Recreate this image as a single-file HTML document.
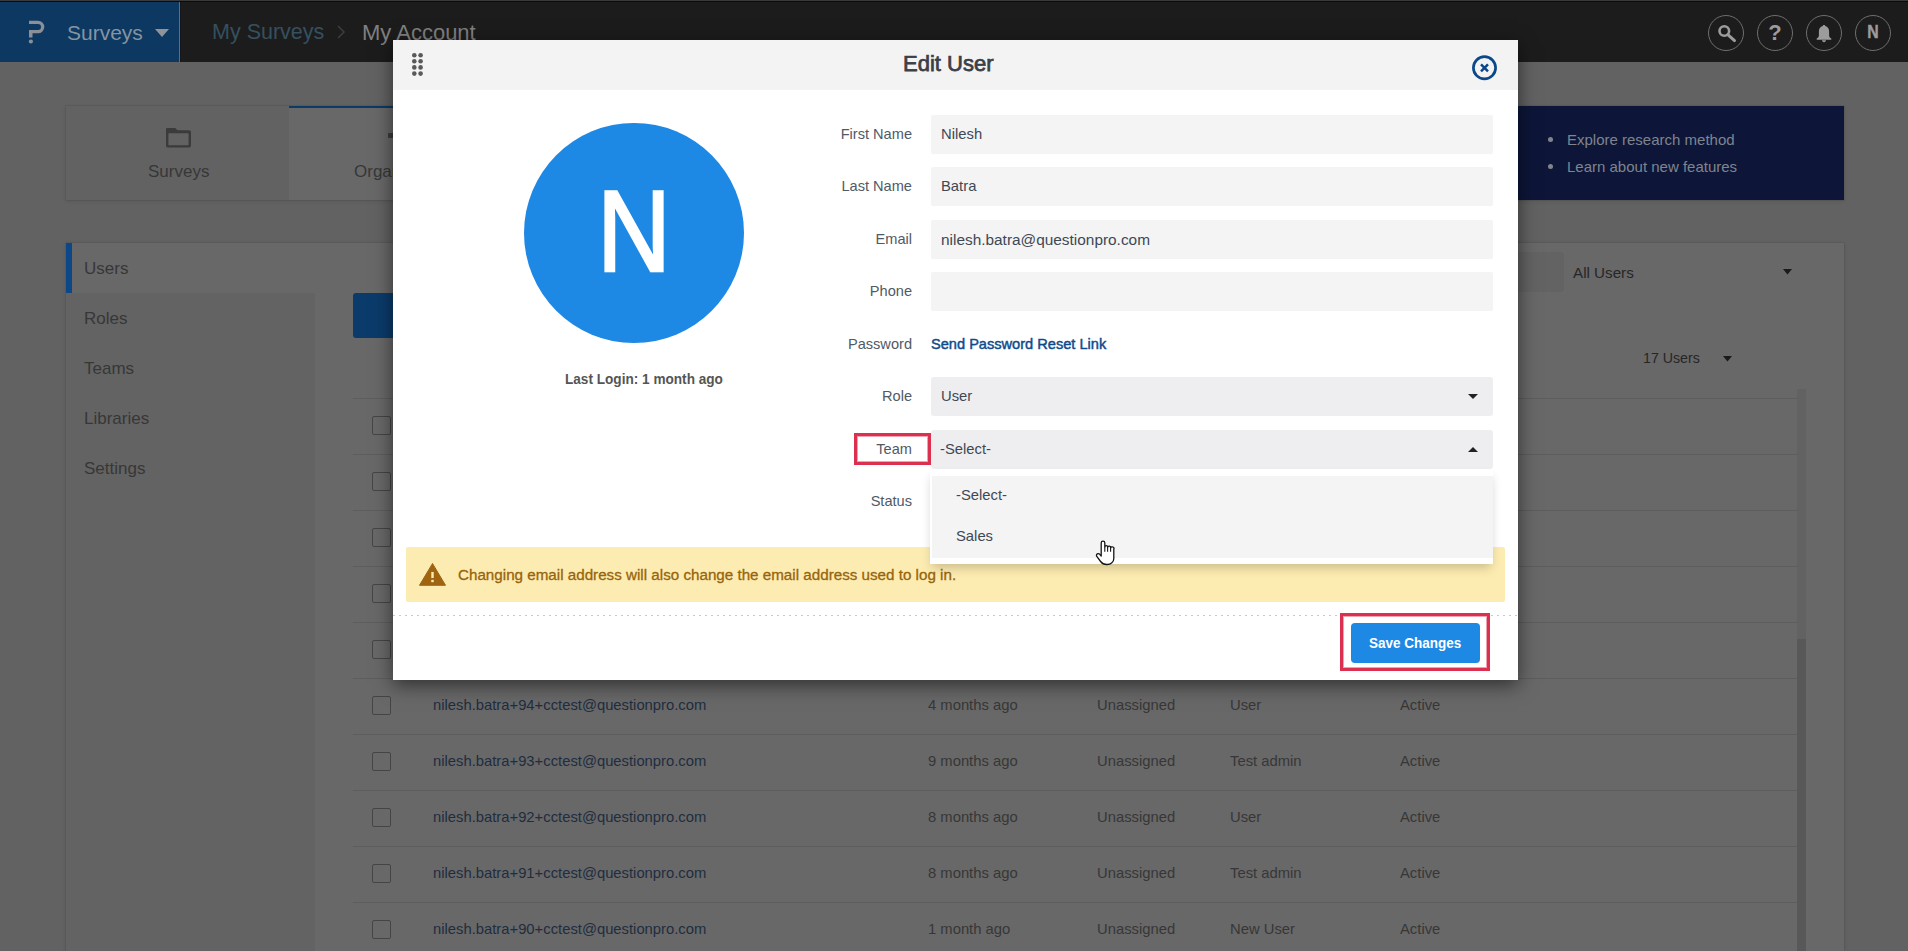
<!DOCTYPE html>
<html><head><meta charset="utf-8">
<style>
*{box-sizing:border-box;margin:0;padding:0}
html,body{width:1908px;height:951px;overflow:hidden;background:#626262;font-family:"Liberation Sans",sans-serif}
.a{position:absolute}
.t{position:absolute;white-space:nowrap;line-height:1}
.rc{font-size:14.8px;color:#373737}
.lbl{right:996px;font-size:14.6px;color:#505a66;text-align:right}
.val{left:941px;font-size:14.8px;color:#3e4854}
.inp{left:931px;width:562px;height:39px;background:#f4f4f4;border-radius:2px}
.sel{left:931px;width:562px;height:39px;background:#eeeef0;border-radius:3px}
</style></head><body>
<!-- HEADER -->
<div class="a" style="left:0;top:0;width:1908px;height:62px;background:#1c1c1c;border-top:2px solid #0b0b0b"></div>
<div class="a" style="left:0;top:0;width:1908px;height:1px;background:#3a3a3a"></div>
<div class="a" style="left:0;top:2px;width:179px;height:60px;background:#0c3862"></div>
<div class="a" style="left:179px;top:2px;width:1px;height:60px;background:#5b6f82"></div>
<div class="a" style="left:180px;top:2px;width:1px;height:60px;background:#14171b"></div>
<svg class="a" style="left:26px;top:18px" width="22" height="30" viewBox="0 0 22 30">
  <path d="M3 2.7 H12 A6.3 6.3 0 0 1 12 15.3 H6.5 V19.5 H3 V12 H12 A3 3 0 0 0 12 6 H3 Z" fill="#8a9096"/>
  <circle cx="4.9" cy="23.5" r="2.1" fill="#8a9096"/>
</svg>
<div class="t" style="left:67px;top:22px;font-size:21px;color:#8594a1">Surveys</div>
<svg class="a" style="left:155px;top:29px" width="14" height="8"><path d="M0 0H14L7 8Z" fill="#8f9498"/></svg>
<div class="t" style="left:212px;top:22px;font-size:21.5px;color:#35505f">My Surveys</div>
<svg class="a" style="left:336px;top:25px" width="10" height="14"><path d="M2 1L8 7L2 13" stroke="#3d3d3d" stroke-width="1.5" fill="none"/></svg>
<div class="t" style="left:362px;top:22px;font-size:22px;color:#808080">My Account</div>

<!-- header icons -->
<div class="a" style="left:1708px;top:15px;width:36px;height:36px;border:1.5px solid #6e6e6e;border-radius:50%"></div>
<div class="a" style="left:1757px;top:15px;width:36px;height:36px;border:1.5px solid #6e6e6e;border-radius:50%"></div>
<div class="a" style="left:1806px;top:15px;width:36px;height:36px;border:1.5px solid #6e6e6e;border-radius:50%"></div>
<div class="a" style="left:1855px;top:15px;width:36px;height:36px;border:1.5px solid #6e6e6e;border-radius:50%"></div>
<svg class="a" style="left:1708px;top:15px" width="36" height="36"><circle cx="16.3" cy="16" r="4.8" fill="none" stroke="#9c9c9c" stroke-width="2.6"/><path d="M19.8 19.6L26.5 25.6" stroke="#9c9c9c" stroke-width="3" stroke-linecap="round"/></svg>
<div class="t" style="left:1757px;top:22px;width:36px;text-align:center;font-size:22px;font-weight:bold;color:#9c9c9c">?</div>
<svg class="a" style="left:1806px;top:15px" width="36" height="36"><path d="M18 10c.8 0 1.3.5 1.3 1.1 2.5.7 3.8 2.8 3.8 5.5v3.8c0 1.2.8 2.2 2.2 3.2v1.1H10.7v-1.1c1.4-1 2.2-2 2.2-3.2v-3.8c0-2.7 1.3-4.8 3.8-5.5 0-.6.5-1.1 1.3-1.1zM16 25.3h4c0 1.1-.9 1.9-2 1.9s-2-.8-2-1.9z" fill="#9c9c9c"/></svg>
<div class="t" style="left:1855px;top:23px;width:36px;text-align:center;font-size:18px;font-weight:bold;color:#9c9c9c;transform:scaleX(0.88);-webkit-text-stroke:0.4px #9c9c9c">N</div>

<!-- PAGE BG CONTENT -->
<!-- tab panel -->
<div class="a" style="left:66px;top:106px;width:1778px;height:94px;background:#646464;box-shadow:0 0 0 1px rgba(0,0,0,.05),0 1px 4px rgba(0,0,0,.12)"></div>
<div class="a" style="left:66px;top:106px;width:223px;height:94px;background:#626262"></div>
<div class="a" style="left:289px;top:106px;width:250px;height:94px;background:#686868;border-top:2.5px solid #0b3a67"></div>
<svg class="a" style="left:165px;top:127px" width="27" height="22" viewBox="0 0 27 22"><rect x="2.2" y="4.6" width="22.6" height="14.8" rx="1" fill="none" stroke="#3b3b3b" stroke-width="2.4"/><path d="M1 5V2.2Q1 1 2.2 1H10.4L12.6 3.4H24.3Q25.9 3.4 25.9 5V6.3H1Z" fill="#3b3b3b"/></svg>
<div class="t" style="left:148px;top:163px;font-size:17px;color:#373737">Surveys</div>
<div class="t" style="left:354px;top:163px;font-size:17px;color:#373737">Organization</div>
<div class="a" style="left:388px;top:133px;width:6px;height:5px;border-radius:1px;background:#3c3c3c"></div>
<!-- banner -->
<div class="a" style="left:1300px;top:106px;width:544px;height:94px;background:#0d1639"></div>
<div class="a" style="left:1548px;top:137px;width:5px;height:5px;border-radius:50%;background:#80848d"></div>
<div class="a" style="left:1548px;top:164px;width:5px;height:5px;border-radius:50%;background:#80848d"></div>
<div class="t" style="left:1567px;top:132px;font-size:15px;color:#7f848e">Explore research method</div>
<div class="t" style="left:1567px;top:159px;font-size:15px;color:#7f848e">Learn about new features</div>

<!-- main card -->
<div class="a" style="left:66px;top:243px;width:1778px;height:708px;background:#686868;box-shadow:0 0 0 1px rgba(0,0,0,.05),0 1px 4px rgba(0,0,0,.12)"></div>
<div class="a" style="left:66px;top:293px;width:249px;height:658px;background:#636363"></div>
<div class="a" style="left:66px;top:243px;width:6px;height:50px;background:#0c4787"></div>
<div class="t" style="left:84px;top:260px;font-size:17px;color:#373737">Users</div>
<div class="t" style="left:84px;top:310px;font-size:17px;color:#373737">Roles</div>
<div class="t" style="left:84px;top:360px;font-size:17px;color:#373737">Teams</div>
<div class="t" style="left:84px;top:410px;font-size:17px;color:#373737">Libraries</div>
<div class="t" style="left:84px;top:460px;font-size:17px;color:#373737">Settings</div>
<!-- add user button -->
<div class="a" style="left:353px;top:293px;width:160px;height:45px;border-radius:3px;background:#0b3b6b"></div>
<!-- filter -->
<div class="a" style="left:1400px;top:252px;width:164px;height:40px;border-radius:4px;background:#636363"></div>
<div class="t" style="left:1573px;top:264.5px;font-size:15.2px;color:#262626">All Users</div>
<svg class="a" style="left:1783px;top:269px" width="9" height="5.5"><path d="M0 0H9L4.5 5.5Z" fill="#1a1a1a"/></svg>
<div class="t" style="left:1643px;top:351px;font-size:14.2px;color:#262626">17 Users</div>
<svg class="a" style="left:1723px;top:356px" width="9" height="5.5"><path d="M0 0H9L4.5 5.5Z" fill="#1a1a1a"/></svg>
<!-- scrollbar -->
<div class="a" style="left:1797px;top:389px;width:9px;height:562px;background:#626262"></div>
<div class="a" style="left:1797px;top:639px;width:9px;height:312px;background:#585858"></div>
<div class="a" style="left:353px;top:398px;width:1445px;height:1px;background:#5d5d5d"></div>
<div class="a" style="left:372px;top:416px;width:19px;height:19px;border:1px solid #454545;border-radius:2px"></div>
<div class="a" style="left:353px;top:454px;width:1445px;height:1px;background:#5d5d5d"></div>
<div class="a" style="left:372px;top:472px;width:19px;height:19px;border:1px solid #454545;border-radius:2px"></div>
<div class="a" style="left:353px;top:510px;width:1445px;height:1px;background:#5d5d5d"></div>
<div class="a" style="left:372px;top:528px;width:19px;height:19px;border:1px solid #454545;border-radius:2px"></div>
<div class="a" style="left:353px;top:566px;width:1445px;height:1px;background:#5d5d5d"></div>
<div class="a" style="left:372px;top:584px;width:19px;height:19px;border:1px solid #454545;border-radius:2px"></div>
<div class="a" style="left:353px;top:622px;width:1445px;height:1px;background:#5d5d5d"></div>
<div class="a" style="left:372px;top:640px;width:19px;height:19px;border:1px solid #454545;border-radius:2px"></div>
<div class="a" style="left:353px;top:678px;width:1445px;height:1px;background:#5d5d5d"></div>
<div class="a" style="left:372px;top:696px;width:19px;height:19px;border:1px solid #454545;border-radius:2px"></div>
<div class="t" style="left:433px;top:698px;font-size:14.8px;color:#1f2d3f">nilesh.batra+94+cctest@questionpro.com</div>
<div class="t rc" style="left:928px;top:698px">4 months ago</div>
<div class="t rc" style="left:1097px;top:698px">Unassigned</div>
<div class="t rc" style="left:1230px;top:698px">User</div>
<div class="t rc" style="left:1400px;top:698px">Active</div>
<div class="a" style="left:353px;top:734px;width:1445px;height:1px;background:#5d5d5d"></div>
<div class="a" style="left:372px;top:752px;width:19px;height:19px;border:1px solid #454545;border-radius:2px"></div>
<div class="t" style="left:433px;top:754px;font-size:14.8px;color:#1f2d3f">nilesh.batra+93+cctest@questionpro.com</div>
<div class="t rc" style="left:928px;top:754px">9 months ago</div>
<div class="t rc" style="left:1097px;top:754px">Unassigned</div>
<div class="t rc" style="left:1230px;top:754px">Test admin</div>
<div class="t rc" style="left:1400px;top:754px">Active</div>
<div class="a" style="left:353px;top:790px;width:1445px;height:1px;background:#5d5d5d"></div>
<div class="a" style="left:372px;top:808px;width:19px;height:19px;border:1px solid #454545;border-radius:2px"></div>
<div class="t" style="left:433px;top:810px;font-size:14.8px;color:#1f2d3f">nilesh.batra+92+cctest@questionpro.com</div>
<div class="t rc" style="left:928px;top:810px">8 months ago</div>
<div class="t rc" style="left:1097px;top:810px">Unassigned</div>
<div class="t rc" style="left:1230px;top:810px">User</div>
<div class="t rc" style="left:1400px;top:810px">Active</div>
<div class="a" style="left:353px;top:846px;width:1445px;height:1px;background:#5d5d5d"></div>
<div class="a" style="left:372px;top:864px;width:19px;height:19px;border:1px solid #454545;border-radius:2px"></div>
<div class="t" style="left:433px;top:866px;font-size:14.8px;color:#1f2d3f">nilesh.batra+91+cctest@questionpro.com</div>
<div class="t rc" style="left:928px;top:866px">8 months ago</div>
<div class="t rc" style="left:1097px;top:866px">Unassigned</div>
<div class="t rc" style="left:1230px;top:866px">Test admin</div>
<div class="t rc" style="left:1400px;top:866px">Active</div>
<div class="a" style="left:353px;top:902px;width:1445px;height:1px;background:#5d5d5d"></div>
<div class="a" style="left:372px;top:920px;width:19px;height:19px;border:1px solid #454545;border-radius:2px"></div>
<div class="t" style="left:433px;top:922px;font-size:14.8px;color:#1f2d3f">nilesh.batra+90+cctest@questionpro.com</div>
<div class="t rc" style="left:928px;top:922px">1 month ago</div>
<div class="t rc" style="left:1097px;top:922px">Unassigned</div>
<div class="t rc" style="left:1230px;top:922px">New User</div>
<div class="t rc" style="left:1400px;top:922px">Active</div>
<!-- MODAL -->
<div class="a" style="left:393px;top:40px;width:1125px;height:640px;background:#fff;box-shadow:0 5px 18px rgba(0,0,0,.55)"></div>
<div class="a" style="left:393px;top:40px;width:1125px;height:50px;background:#f3f3f3"></div>
<svg class="a" style="left:409px;top:50px" width="18" height="30">
  <g fill="#595959">
  <circle cx="5.3" cy="5.2" r="2.3"/><circle cx="11.6" cy="5.2" r="2.3"/>
  <circle cx="5.3" cy="11.3" r="2.3"/><circle cx="11.6" cy="11.3" r="2.3"/>
  <circle cx="5.3" cy="17.4" r="2.3"/><circle cx="11.6" cy="17.4" r="2.3"/>
  <circle cx="5.3" cy="23.6" r="2.3"/><circle cx="11.6" cy="23.6" r="2.3"/>
  </g>
</svg>
<div class="t" style="left:903px;top:53px;font-size:22px;color:#3b3f48;-webkit-text-stroke:0.75px #3b3f48">Edit User</div>
<svg class="a" style="left:1469px;top:53px" width="30" height="30">
  <circle cx="15.5" cy="14.8" r="11.1" fill="none" stroke="#0a4889" stroke-width="2.7"/>
  <path d="M12 11.3L19 18.3M19 11.3L12 18.3" stroke="#0a4889" stroke-width="2.5"/>
</svg>

<!-- avatar -->
<div class="a" style="left:524px;top:123px;width:220px;height:220px;border-radius:50%;background:#1e88e5"></div>
<div class="t" style="left:524px;top:173.5px;width:220px;text-align:center;font-size:115px;color:#fff;transform:scaleX(0.885);-webkit-text-stroke:2.6px #fff">N</div>
<div class="t" style="left:565px;top:371.5px;font-size:14.4px;font-weight:bold;color:#555;transform:scaleX(0.945);transform-origin:0 0">Last Login: 1 month ago</div>

<!-- labels -->
<div class="t lbl" style="top:127px">First Name</div>
<div class="t lbl" style="top:179px">Last Name</div>
<div class="t lbl" style="top:232px">Email</div>
<div class="t lbl" style="top:284px">Phone</div>
<div class="t lbl" style="top:337px">Password</div>
<div class="t lbl" style="top:389px">Role</div>
<div class="t lbl" style="top:442px">Team</div>
<div class="t lbl" style="top:494px">Status</div>

<!-- inputs -->
<div class="a inp" style="top:115px"></div>
<div class="a inp" style="top:167px"></div>
<div class="a inp" style="top:220px"></div>
<div class="a inp" style="top:272px"></div>
<div class="t val" style="top:127px">Nilesh</div>
<div class="t val" style="top:179px">Batra</div>
<div class="t val" style="top:232px;font-size:15.4px">nilesh.batra@questionpro.com</div>
<div class="t" style="left:931px;top:337px;font-size:14.6px;color:#0d4b8c;-webkit-text-stroke:0.45px #0d4b8c">Send Password Reset Link</div>
<div class="a sel" style="top:377px"></div>
<div class="t val" style="top:389px">User</div>
<svg class="a" style="left:1468px;top:394px" width="10" height="5"><path d="M0 0H10L5 5Z" fill="#222"/></svg>
<div class="a sel" style="top:430px"></div>
<div class="t val" style="top:442px;left:940px">-Select-</div>
<svg class="a" style="left:1468px;top:446.5px" width="10" height="5"><path d="M0 5H10L5 0Z" fill="#222"/></svg>
<div class="a" style="left:854px;top:433px;width:77px;height:32px;border:3px solid #dc3050;box-shadow:inset 0 0 0 1px rgba(220,48,80,.45)"></div>

<!-- alert -->
<div class="a" style="left:406px;top:547px;width:1099px;height:55px;border-radius:2px;background:#fdecb1"></div>
<svg class="a" style="left:418px;top:560px" width="30" height="27">
  <path d="M14.5 3.5L27.5 25.3H1.5Z" fill="#9e640f" stroke="#9e640f" stroke-width="1" stroke-linejoin="round"/>
  <rect x="13.3" y="12" width="2.4" height="6" fill="#fdecb1"/>
  <rect x="13.3" y="19.8" width="2.4" height="2.4" fill="#fdecb1"/>
</svg>
<div class="t" style="left:458px;top:567px;font-size:15.2px;color:#97640c;-webkit-text-stroke:0.3px #97640c">Changing email address will also change the email address used to log in.</div>

<!-- dropdown -->
<div class="a" style="left:930px;top:469px;width:563px;height:95px;background:#fff;box-shadow:0 6px 10px -2px rgba(0,0,0,.2)"></div>
<div class="a" style="left:932px;top:476px;width:561px;height:82px;background:#f4f4f4"></div>
<div class="t val" style="top:488px;left:956px">-Select-</div>
<div class="t val" style="top:529px;left:956px">Sales</div>

<!-- footer -->
<div class="a" style="left:393px;top:615px;width:1125px;height:1px;background:repeating-linear-gradient(90deg,#c9c9c9 0 2px,transparent 2px 6px)"></div>
<div class="a" style="left:1351px;top:623px;width:129px;height:40px;border-radius:4px;background:#1e88e5"></div>
<div class="t" style="left:1369px;top:635px;font-size:15px;font-weight:bold;color:#fff;transform:scaleX(0.9);transform-origin:0 0">Save Changes</div>
<div class="a" style="left:1340px;top:613px;width:150px;height:58px;border:3px solid #dc3050;box-shadow:inset 0 0 0 1px rgba(220,48,80,.45)"></div>

<!-- cursor -->
<svg class="a" style="left:1080px;top:530px" width="50" height="45" viewBox="0 0 50 45">
  <path d="M21.2 25V12.9A1.8 1.8 0 0 1 24.8 12.9V16.9A1.4 1.4 0 0 1 27.6 17.3A1.5 1.5 0 0 1 30.6 17.9A1.6 1.6 0 0 1 33.8 19.3V28.4C33.8 32 30.9 34.5 27.2 34.5H26.6C24.1 34.5 22 33.4 20.6 31.5L16.8 26.4C16.2 25.6 16.4 24.5 17.3 23.9C18.2 23.4 19.2 23.6 19.8 24.4L21.2 26Z" fill="#fff" stroke="#151515" stroke-width="1.3" stroke-linejoin="round"/>
  <path d="M24.8 16.9V21.8M27.6 17.3V21.8M30.6 17.9V21.8" stroke="#151515" stroke-width="1.1"/>
</svg>
</body></html>
